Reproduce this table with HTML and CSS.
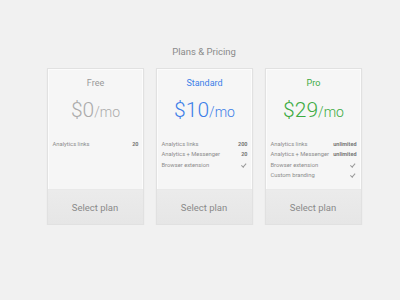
FILE: index.html
```html
<!DOCTYPE html>
<html lang="en">
<head>
  <meta charset="UTF-8">
  <meta name="viewport" content="width=device-width, initial-scale=1.0">
  <title>Plans &amp; Pricing</title>
  <link rel="stylesheet" href="styles.css">
</head>
<body>
  <div class="page">
    <h1>Plans &amp; Pricing</h1>

    <div class="plans">
      <div class="card free">
        <div class="card-body">
          <h2 class="plan-name">Free</h2>
          <div class="price"><span class="amount">$0</span><span class="per">/mo</span></div>
          <ul class="features">
            <li><span>Analytics links</span><b>20</b></li>
          </ul>
        </div>
        <button class="select-btn">Select plan</button>
      </div>

      <div class="card standard">
        <div class="card-body">
          <h2 class="plan-name">Standard</h2>
          <div class="price"><span class="amount">$10</span><span class="per">/mo</span></div>
          <ul class="features">
            <li><span>Analytics links</span><b>200</b></li>
            <li><span>Analytics + Messenger</span><b>20</b></li>
            <li><span>Browser extension</span><i class="check"></i></li>
          </ul>
        </div>
        <button class="select-btn">Select plan</button>
      </div>

      <div class="card pro">
        <div class="card-body">
          <h2 class="plan-name">Pro</h2>
          <div class="price"><span class="amount">$29</span><span class="per">/mo</span></div>
          <ul class="features">
            <li><span>Analytics links</span><b>unlimited</b></li>
            <li><span>Analytics + Messenger</span><b>unlimited</b></li>
            <li><span>Browser extension</span><i class="check"></i></li>
            <li><span>Custom branding</span><i class="check"></i></li>
          </ul>
        </div>
        <button class="select-btn">Select plan</button>
      </div>
    </div>
  </div>
</body>
</html>
```

FILE: styles.css
```css
* {
  margin: 0;
  padding: 0;
  box-sizing: border-box;
}

body {
  font-family: Roboto, 'Liberation Sans', sans-serif;
  background: #f1f1f1;
  color: #888;
}

.page {
  padding-top: 45px;
  padding-left: 8px;
}

h1 {
  text-align: center;
  font-size: 9.5px;
  font-weight: 400;
  line-height: 14px;
  color: #8a8a8a;
  margin-bottom: 9px;
}

.plans {
  display: grid;
  grid-template-columns: repeat(3, 97px);
  gap: 12px;
  justify-content: center;
}

.card {
  display: flex;
  flex-direction: column;
  height: 157px;
  background: #f6f6f6;
  border: 1px solid #e1e1e1;
  box-shadow: inset 0 0 0 1px rgba(255, 255, 255, 0.7), 0 1px 2px rgba(0, 0, 0, 0.04);
}

.card-body {
  flex: 1;
  padding: 8px 4px 0 5px;
}

.plan-name {
  text-align: center;
  font-size: 9px;
  font-weight: 400;
  line-height: 12px;
  color: #999;
}

.price {
  text-align: center;
  margin-top: 8px;
  line-height: 26px;
  font-weight: 300;
  color: #ababab;
  white-space: nowrap;
}

.amount {
  font-size: 21px;
}

.per {
  font-size: 14px;
}

.standard .plan-name,
.standard .price {
  color: #3d7ee8;
}

.pro .plan-name,
.pro .price {
  color: #3cab42;
}

.features {
  list-style: none;
  margin-top: 14px;
}

.features li {
  display: flex;
  justify-content: space-between;
  align-items: center;
  gap: 4px;
  font-size: 5.8px;
  line-height: 10.4px;
  color: #8c8c8c;
  white-space: nowrap;
}

.features b {
  font-size: 5.5px;
  font-weight: 700;
  color: #777;
}

.check {
  display: block;
  width: 5px;
  height: 3px;
  margin-right: 1px;
  border-left: 1px solid #999;
  border-bottom: 1px solid #999;
  transform: rotate(-50deg) translateY(-1px);
}

.select-btn {
  height: 35px;
  border: none;
  border-top: 1px solid #e9e9e9;
  background: linear-gradient(#ebebeb, #e6e6e6);
  font-family: inherit;
  font-size: 9.5px;
  color: #8a8a8a;
  cursor: pointer;
}
```
